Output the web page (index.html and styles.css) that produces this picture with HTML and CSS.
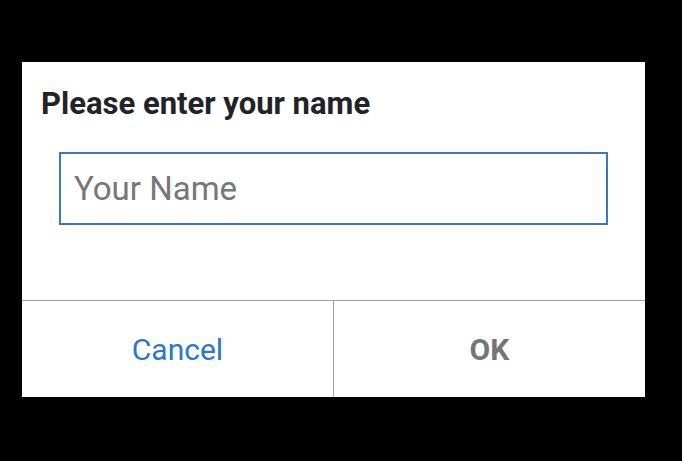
FILE: index.html
```html
<!DOCTYPE html>
<html lang="en">
<head>
    <meta charset="UTF-8">
    <meta name="viewport" content="width=device-width">
    <title>Enter name</title>
    <link rel="stylesheet" href="styles.css">
</head>
<body>
    <div class="dialog">
        <div class="dialog-body">
            <h2 class="dialog-title">Please enter your name</h2>
            <input class="name-input" type="text" placeholder="Your Name">
        </div>
        <div class="dialog-buttons">
            <button class="btn btn-cancel">Cancel</button>
            <button class="btn btn-ok">OK</button>
        </div>
    </div>
</body>
</html>
```

FILE: styles.css
```css
html, body {
    margin: 0;
    padding: 0;
    background: #000;
    height: 100%;
}

body {
    font-family: Roboto, "Liberation Sans", sans-serif;
    padding-top: 62px;
    box-sizing: border-box;
}

.dialog {
    background: #fff;
    width: 623px;
    height: 335px;
    margin-left: 22px;
    display: flex;
    flex-direction: column;
}

.dialog-body {
    flex: 1;
    padding: 0 37px;
}

.dialog-title {
    margin: 0;
    margin-left: -18px;
    padding-top: 24px;
    font-size: 31px;
    line-height: 36px;
    font-weight: bold;
    color: #222229;
}

.name-input {
    display: block;
    box-sizing: border-box;
    width: 549px;
    height: 73px;
    margin-top: 30px;
    border: 2px solid #3b79ba;
    padding: 0 13px;
    font-family: inherit;
    font-size: 33px;
    color: #333;
    outline: none;
}

.name-input::placeholder {
    color: #777;
}

.dialog-buttons {
    display: flex;
    height: 96px;
    border-top: 1px solid #a0a0a0;
}

.btn {
    flex: 1;
    background: #fff;
    border: none;
    font-family: inherit;
    font-size: 30px;
    padding: 0;
    cursor: pointer;
}

.btn-cancel {
    color: #2a78cc;
    border-right: 1px solid #a0a0a0;
}

.btn-ok {
    color: #757575;
    font-weight: bold;
}
```
